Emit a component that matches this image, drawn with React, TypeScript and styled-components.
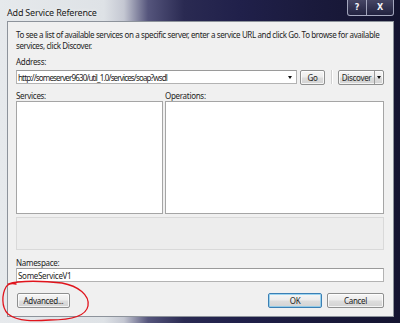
import React from 'react';
import styled, { createGlobalStyle } from 'styled-components';

const Global = createGlobalStyle`
  html, body { margin: 0; padding: 0; background: #12122a; }
  body {
    width: 400px; height: 323px; overflow: hidden;
    font-family: "Noto Sans", "Open Sans", "DejaVu Sans", sans-serif;
  }
`;

const Window = styled.div`
  position: relative;
  width: 400px;
  height: 323px;
  box-sizing: border-box;
  padding: 0 6px 6px 7px;
  display: flex;
  flex-direction: column;
  background: linear-gradient(90deg, #e6e9ec 0%, #dee2e6 26%, #c4c7d2 31%, #55557c 37%, #2a2a52 46%, #20204a 60%, #1a1a3c 78%, #141430 100%);
`;

const TitleBar = styled.div`
  height: 21px;
  display: flex;
  align-items: flex-start;
`;

const Title = styled.div`
  font-size: 9px;
  line-height: 11px;
  margin-top: 7px;
  color: #1a1a1a;
  text-shadow: 0 0 4px rgba(255,255,255,0.9);
  letter-spacing: -0.2px;
`;

const Caption = styled.div`
  margin-left: auto;
  display: flex;
  height: 16px;
`;

const CapButton = styled.div<{ $w: number }>`
  width: ${p => p.$w}px;
  height: 16px;
  box-sizing: border-box;
  border: 1px solid rgba(200, 205, 225, 0.75);
  border-top: none;
  background: linear-gradient(180deg, rgba(110,110,140,0.55), rgba(40,40,70,0.7));
  color: #f4f4f8;
  font-family: "DejaVu Sans", sans-serif;
  font-weight: bold;
  font-size: 8px;
  display: flex;
  align-items: center;
  justify-content: center;
  &:first-child { border-bottom-left-radius: 3px; }
  &:last-child { border-bottom-right-radius: 3px; border-left: none; }
`;

const Client = styled.div`
  flex: 1;
  box-sizing: border-box;
  background: #f0f0f0;
  border: 1px solid #8d939b;
  padding: 7px 9px 8px 8px;
  display: flex;
  flex-direction: column;
  color: #1e1e1e;
  font-size: 8px;
  line-height: 11px;
  letter-spacing: -0.3px;
`;

const Intro = styled.div`
  white-space: nowrap;
  letter-spacing: -0.38px;
`;

const Label = styled.div<{ $mt: number }>`
  margin-top: ${p => p.$mt}px;
`;

const AddressRow = styled.div`
  margin-top: 3px;
  display: flex;
  align-items: center;
  height: 14px;
`;

const Input = styled.div`
  box-sizing: border-box;
  height: 14px;
  background: #fff;
  border: 1px solid #b3b3b3;
  border-top-color: #9a9a9a;
  display: flex;
  align-items: center;
  padding-left: 1px;
  white-space: nowrap;
  overflow: hidden;
`;

const ComboInput = styled(Input)`
  width: 281px;
  letter-spacing: -0.85px;
`;

const Arrow = styled.span`
  width: 0; height: 0;
  border-left: 2.5px solid transparent;
  border-right: 2.5px solid transparent;
  border-top: 3px solid #111;
`;

const ComboArrow = styled.span`
  margin-left: auto;
  margin-right: 4px;
  display: flex;
`;

const Button = styled.div<{ $w: number; $default?: boolean; $ml?: number }>`
  box-sizing: border-box;
  width: ${p => p.$w}px;
  margin-left: ${p => p.$ml ?? 0}px;
  height: 15px;
  border: 1px solid ${p => (p.$default ? '#3b7fb4' : '#8e8f8f')};
  border-radius: 2px;
  background: linear-gradient(180deg, #f6f6f6 0%, #ececec 48%, #dddddd 52%, #d3d3d3 100%);
  box-shadow: inset 0 0 0 1px ${p => (p.$default ? 'rgba(120,200,240,0.7)' : 'rgba(255,255,255,0.75)')};
  display: flex;
  align-items: center;
  justify-content: center;
  color: #1e1e1e;
  font-size: 8px;
`;

const Separator = styled.div`
  width: 1px;
  height: 14px;
  background: #d0d0d0;
  border-right: 1px solid #fff;
  margin: 0 5px 0 6px;
`;

const SplitButton = styled.div`
  box-sizing: border-box;
  width: 46px;
  height: 15px;
  border: 1px solid #8e8f8f;
  border-radius: 2px;
  background: linear-gradient(180deg, #f6f6f6 0%, #ececec 48%, #dddddd 52%, #d3d3d3 100%);
  box-shadow: inset 0 0 0 1px rgba(255,255,255,0.75);
  display: flex;
  align-items: stretch;
  font-size: 8px;
`;

const SplitMain = styled.div`
  flex: 1;
  display: flex;
  align-items: center;
  justify-content: center;
  border-right: 1px solid #9a9a9a;
`;

const SplitArrow = styled.div`
  width: 8px;
  display: flex;
  align-items: center;
  justify-content: center;
`;

const Columns = styled.div`
  display: grid;
  grid-template-columns: 147px 1fr;
  grid-template-rows: 11px 1fr;
  column-gap: 2px;
  margin-top: 6px;
  flex: 1;
`;

const ColLabel = styled.div``;

const ListBox = styled.div`
  background: #fff;
  border: 1px solid #a5a5a5;
  box-sizing: border-box;
`;

const DescPanel = styled.div`
  margin-top: 3px;
  height: 33px;
  box-sizing: border-box;
  border: 1px solid #d9d9d9;
  background: #ededed;
`;

const Footer = styled.div`
  margin-top: 11px;
  display: flex;
  align-items: center;
`;

const Spacer = styled.div`
  flex: 1;
`;

const Scribble = styled.svg`
  position: absolute;
  left: 0;
  top: 278px;
  pointer-events: none;
`;

export default function App() {
  return (
    <>
      <Global />
      <Window>
        <TitleBar>
          <Title>Add Service Reference</Title>
          <Caption>
            <CapButton $w={20}>?</CapButton>
            <CapButton $w={27}>X</CapButton>
          </Caption>
        </TitleBar>
        <Client>
          <Intro>
            To see a list of available services on a specific server, enter a service URL and click Go. To browse for available
            <br />
            services, click Discover.
          </Intro>
          <Label $mt={5}>Address:</Label>
          <AddressRow>
            <ComboInput>
              http://someserver9630/util_1.0/services/soap?wsdl
              <ComboArrow><Arrow /></ComboArrow>
            </ComboInput>
            <Button $w={25} $ml={3}>Go</Button>
            <Separator />
            <SplitButton>
              <SplitMain>Discover</SplitMain>
              <SplitArrow><Arrow /></SplitArrow>
            </SplitButton>
          </AddressRow>
          <Columns>
            <ColLabel>Services:</ColLabel>
            <ColLabel>Operations:</ColLabel>
            <ListBox />
            <ListBox />
          </Columns>
          <DescPanel />
          <Label $mt={7}>Namespace:</Label>
          <Input>SomeServiceV1</Input>
          <Footer>
            <Button $w={53} $ml={1}>Advanced...</Button>
            <Spacer />
            <Button $w={54} $default>OK</Button>
            <Button $w={57} $ml={5}>Cancel</Button>
          </Footer>
        </Client>
        <Scribble width="100" height="45" viewBox="0 0 100 45">
          <path
            d="M8 6 C 20 2, 45 3, 62 5 C 78 8, 90 17, 88 28 C 86 38, 72 42, 50 42 C 35 43, 18 44, 8 36 C 1 29, 2 16, 6 9 C 8 6, 12 5, 16 6"
            fill="none"
            stroke="#e0141c"
            strokeWidth="1.3"
            strokeLinecap="round"
          />
        </Scribble>
      </Window>
    </>
  );
}
